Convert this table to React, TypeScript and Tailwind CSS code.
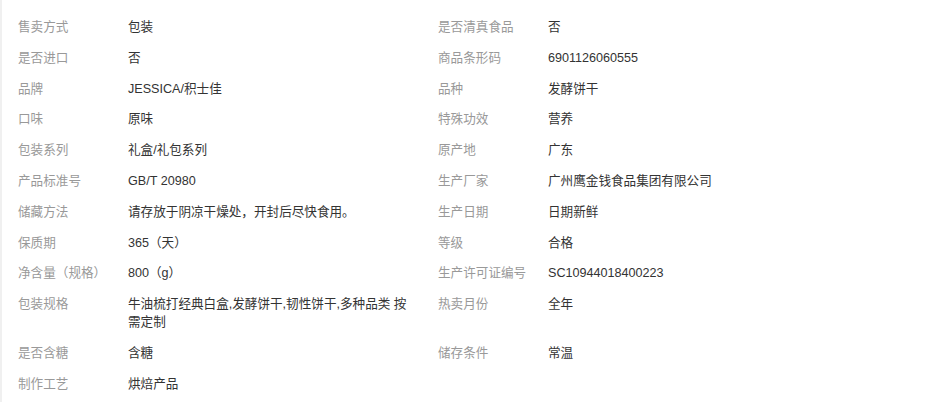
import React from 'react';

const attrs: [string, string][] = [
  ['售卖方式', '包装'],
  ['是否清真食品', '否'],
  ['是否进口', '否'],
  ['商品条形码', '6901126060555'],
  ['品牌', 'JESSICA/积士佳'],
  ['品种', '发酵饼干'],
  ['口味', '原味'],
  ['特殊功效', '营养'],
  ['包装系列', '礼盒/礼包系列'],
  ['原产地', '广东'],
  ['产品标准号', 'GB/T 20980'],
  ['生产厂家', '广州鹰金钱食品集团有限公司'],
  ['储藏方法', '请存放于阴凉干燥处，开封后尽快食用。'],
  ['生产日期', '日期新鲜'],
  ['保质期', '365（天）'],
  ['等级', '合格'],
  ['净含量（规格）', '800（g）'],
  ['生产许可证编号', 'SC10944018400223'],
  ['包装规格', '牛油梳打经典白盒,发酵饼干,韧性饼干,多种品类 按需定制'],
  ['热卖月份', '全年'],
  ['是否含糖', '含糖'],
  ['储存条件', '常温'],
  ['制作工艺', '烘焙产品'],
];

export default function App() {
  return (
    <div
      className="w-[926px] h-[402px] bg-white border-l-2 border-[#f0f0f0] overflow-hidden"
      style={{ fontFamily: '"Liberation Sans", Arial, "Noto Sans CJK SC", sans-serif' }}
    >
      <div className="grid grid-cols-[420px_420px] pl-4 pt-[18px] text-[12.6px] leading-[18px]">
        {attrs.map(([label, value], i) => (
          <div key={i} className="flex mb-[12.8px]">
            <span className="w-[110px] shrink-0 text-[#999]">{label}</span>
            <span className="w-[290px] text-[#333] break-all">{value}</span>
          </div>
        ))}
      </div>
    </div>
  );
}
